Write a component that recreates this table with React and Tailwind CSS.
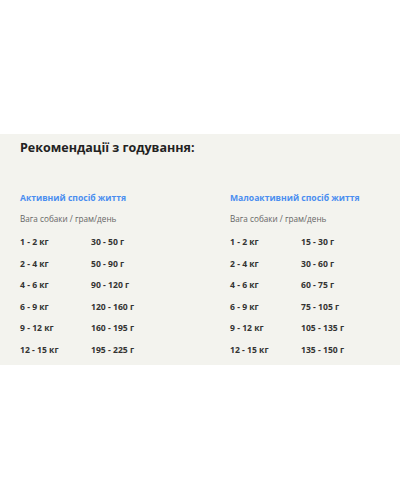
export default function App() {
  const active = [
    ["1 - 2 кг", "30 - 50 г"],
    ["2 - 4 кг", "50 - 90 г"],
    ["4 - 6 кг", "90 - 120 г"],
    ["6 - 9 кг", "120 - 160 г"],
    ["9 - 12 кг", "160 - 195 г"],
    ["12 - 15 кг", "195 - 225 г"],
  ];
  const low = [
    ["1 - 2 кг", "15 - 30 г"],
    ["2 - 4 кг", "30 - 60 г"],
    ["4 - 6 кг", "60 - 75 г"],
    ["6 - 9 кг", "75 - 105 г"],
    ["9 - 12 кг", "105 - 135 г"],
    ["12 - 15 кг", "135 - 150 г"],
  ];
  const Col = ({ title, rows }) => (
    <div className="w-[210px] shrink-0">
      <div className="text-[8.6px] font-bold text-[#4a8ef0] leading-[12px]">{title}</div>
      <div className="mt-[9px] text-[8.2px] text-[#666] leading-[12px]">Вага собаки / грам/день</div>
      <div className="mt-[11px] flex flex-col gap-[9.6px]">
        {rows.map(([a, b]) => (
          <div key={a} className="flex text-[8.6px] font-bold text-[#333] leading-[12px]">
            <div className="w-[71px]">{a}</div>
            <div>{b}</div>
          </div>
        ))}
      </div>
    </div>
  );
  return (
    <div className="w-[400px] h-[500px] bg-white" style={{ fontFamily: '"Open Sans", sans-serif' }}>
      <div className="h-[134px]" />
      <div className="bg-[#f3f3ee] h-[231px] px-[20px] pt-[5px] overflow-hidden">
        <div className="text-[12.5px] font-bold text-[#222] leading-[18px]">Рекомендації з годування:</div>
        <div className="mt-[35px] flex">
          <Col title="Активний спосіб життя" rows={active} />
          <Col title="Малоактивний спосіб життя" rows={low} />
        </div>
      </div>
    </div>
  );
}
